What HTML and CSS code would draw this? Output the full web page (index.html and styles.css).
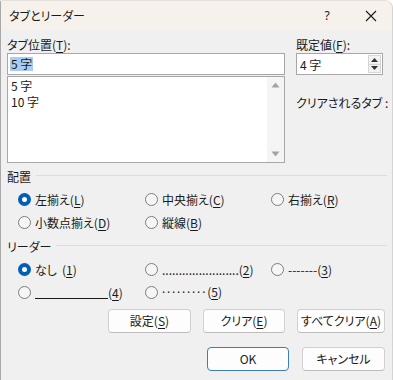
FILE: index.html
```html
<!DOCTYPE html>
<html lang="ja">
<head>
<meta charset="utf-8">
<link rel="stylesheet" href="styles.css">
</head>
<body>
<div class="window">
  <div class="titlebar">
    <span class="title">タブとリーダー</span>
    <span class="help">?</span>
    <span class="close"><svg width="12" height="12" viewBox="0 0 12 12"><path d="M1 1L11 11M11 1L1 11" stroke="#1a1a1a" stroke-width="1.1" fill="none"/></svg></span>
  </div>
  <div class="content">
    <div class="top">
      <div class="left">
        <div class="label">タブ位置(<u>T</u>):</div>
        <div class="input"><span class="sel">5 字</span></div>
        <div class="list">
          <div class="items">
            <div class="item">5 字</div>
            <div class="item">10 字</div>
          </div>
          <div class="scrollbar">
            <svg width="9" height="6" viewBox="0 0 9 6"><path d="M0.5 5.5L4.5 0.5L8.5 5.5Z" fill="#a3a3a3"/></svg>
            <svg width="9" height="6" viewBox="0 0 9 6"><path d="M0.5 0.5L4.5 5.5L8.5 0.5Z" fill="#a3a3a3"/></svg>
          </div>
        </div>
      </div>
      <div class="right">
        <div class="label">既定値(<u>F</u>):</div>
        <div class="spin">
          <span class="spin-val">4 字</span>
          <div class="spin-btns">
            <span class="spin-btn"><svg width="7" height="4" viewBox="0 0 7 4"><path d="M0 4L3.5 0L7 4Z" fill="#333"/></svg></span>
            <span class="spin-btn"><svg width="7" height="4" viewBox="0 0 7 4"><path d="M0 0L3.5 4L7 0Z" fill="#333"/></svg></span>
          </div>
        </div>
        <div class="cleared">クリアされるタブ :</div>
      </div>
    </div>

    <div class="group-head"><span>配置</span><span class="rule"></span></div>
    <div class="radios">
      <div class="radio"><span class="dot on"></span><span>左揃え(<u>L</u>)</span></div>
      <div class="radio"><span class="dot"></span><span>中央揃え(<u>C</u>)</span></div>
      <div class="radio"><span class="dot"></span><span>右揃え(<u>R</u>)</span></div>
      <div class="radio"><span class="dot"></span><span>小数点揃え(<u>D</u>)</span></div>
      <div class="radio"><span class="dot"></span><span>縦線(<u>B</u>)</span></div>
    </div>

    <div class="group-head"><span>リーダー</span><span class="rule"></span></div>
    <div class="radios">
      <div class="radio"><span class="dot on"></span><span><span class="none">なし</span>(<u>1</u>)</span></div>
      <div class="radio"><span class="dot"></span><span>.......................(<u>2</u>)</span></div>
      <div class="radio"><span class="dot"></span><span>-------(<u>3</u>)</span></div>
      <div class="radio"><span class="dot"></span><span><span class="line-leader"></span>(<u>4</u>)</span></div>
      <div class="radio"><span class="dot"></span><span><span class="mid-dots">·········</span>(<u>5</u>)</span></div>
    </div>

    <div class="btnrow first">
      <button class="btn w83">設定(<u>S</u>)</button>
      <button class="btn w82">クリア(<u>E</u>)</button>
      <button class="btn w88">すべてクリア(<u>A</u>)</button>
    </div>
    <div class="btnrow second">
      <button class="btn w82 default">OK</button>
      <button class="btn w83">キャンセル</button>
    </div>
  </div>
</div>
</body>
</html>
```

FILE: styles.css
```css
* { box-sizing: border-box; }
html, body {
  margin: 0;
  padding: 0;
  background: #ffffff;
}
body {
  width: 393px;
  height: 380px;
  overflow: hidden;
  font-family: "Noto Sans CJK JP", "Noto Sans", sans-serif;
  font-size: 12px;
  color: #1a1a1a;
  font-feature-settings: "palt";
}
u {
  text-decoration: underline;
  text-decoration-thickness: 1px;
  text-underline-offset: 2px;
}
.window {
  width: 393px;
  height: 380px;
  background: #f0f0f0;
  border-left: 1px solid #a9a9a9;
  border-top: 1px solid #e4e0dc;
  border-right: 1px solid #d4d4d4;
  border-top-right-radius: 8px;
  border-top-left-radius: 2px;
  overflow: hidden;
}
.titlebar {
  height: 29px;
  background: #f7f1ec;
  display: flex;
  align-items: center;
  padding-left: 8px;
}
.title {
  flex: 1;
  font-size: 12px;
  line-height: 16px;
}
.help {
  width: 12px;
  margin-right: 32px;
  font-size: 12px;
  text-align: center;
  font-family: "Noto Sans", sans-serif;
}
.close {
  display: flex;
  margin-right: 15px;
}
.content {
  padding: 0 7px 0 6px;
}
.top {
  display: flex;
}
.left {
  width: 278px;
}
.right {
  width: 87px;
  margin-left: 11px;
}
.label {
  margin-top: 7px;
  height: 16px;
  line-height: 16px;
  white-space: nowrap;
}
.input {
  height: 22px;
  background: #ffffff;
  border: 1px solid #a7a7a7;
  display: flex;
  align-items: center;
  padding-left: 2px;
}
.sel {
  background: #a8cdf0;
  line-height: 14px;
  padding: 0 1px;
}
.list {
  margin-top: 1px;
  height: 87px;
  background: #ffffff;
  border: 1px solid #a7a7a7;
  display: flex;
}
.items {
  flex: 1;
  padding: 1px 0 0 3px;
}
.item {
  height: 16px;
  line-height: 16px;
}
.scrollbar {
  width: 17px;
  background: #f5f5f5;
  display: flex;
  flex-direction: column;
  align-items: center;
  justify-content: space-between;
  padding: 5px 0 5px 0;
}
.spin {
  height: 22px;
  background: #ffffff;
  border: 1px solid #a7a7a7;
  display: flex;
  align-items: center;
  padding-left: 3px;
}
.spin-val {
  flex: 1;
}
.spin-btns {
  display: flex;
  flex-direction: column;
  height: 18px;
  width: 13px;
  margin-right: 1px;
  border: 1px solid #d6d6d6;
  background: #f2f2f2;
}
.spin-btn {
  flex: 1;
  display: flex;
  align-items: center;
  justify-content: center;
}
.spin-btn + .spin-btn {
  border-top: 1px solid #d6d6d6;
}
.cleared {
  margin-top: 20px;
  height: 16px;
  line-height: 16px;
  white-space: nowrap;
}
.group-head {
  margin-top: 6px;
  height: 16px;
  line-height: 16px;
  display: flex;
  align-items: center;
  margin-right: -2px;
}
.rule {
  flex: 1;
  height: 1px;
  background: #dcdcdc;
  margin-left: 5px;
  margin-top: -3px;
}
.radios {
  margin-top: 3px;
  padding-left: 11px;
  display: grid;
  grid-template-columns: 127px 126px 120px;
  row-gap: 1px;
}
.radio {
  height: 22px;
  display: flex;
  align-items: center;
  gap: 4px;
  white-space: nowrap;
}
.dot {
  width: 13px;
  height: 13px;
  border-radius: 50%;
  border: 1px solid #7d7d7d;
  background: #f6f6f6;
  flex: none;
}
.dot.on {
  border: none;
  background: #005fb8;
  display: flex;
  align-items: center;
  justify-content: center;
}
.dot.on::after {
  content: "";
  width: 5px;
  height: 5px;
  border-radius: 50%;
  background: #ffffff;
}
.none {
  display: inline-block;
  width: 27px;
}
.line-leader {
  display: inline-block;
  width: 73px;
  height: 10px;
  border-bottom: 1px solid #1a1a1a;
  vertical-align: -1px;
}
.mid-dots {
  font-family: "Noto Sans", sans-serif;
  letter-spacing: 1.8px;
}
.btnrow {
  display: flex;
  justify-content: flex-end;
}
.btnrow.first {
  margin-top: 6px;
  gap: 12px;
}
.btnrow.second {
  margin-top: 14px;
  gap: 13px;
}
.btn {
  height: 24px;
  background: #fdfdfd;
  border: 1px solid #d0d0d0;
  border-bottom-color: #bdbdbd;
  border-radius: 4px;
  font-family: "Noto Sans CJK JP", "Noto Sans", sans-serif;
  font-size: 12px;
  font-feature-settings: "palt";
  color: #1a1a1a;
  padding: 0;
  line-height: 16px;
}
.btn.default {
  border: 1px solid #3b7dc0;
}
.w82 { width: 82px; }
.w83 { width: 83px; }
.w88 { width: 88px; }
```
